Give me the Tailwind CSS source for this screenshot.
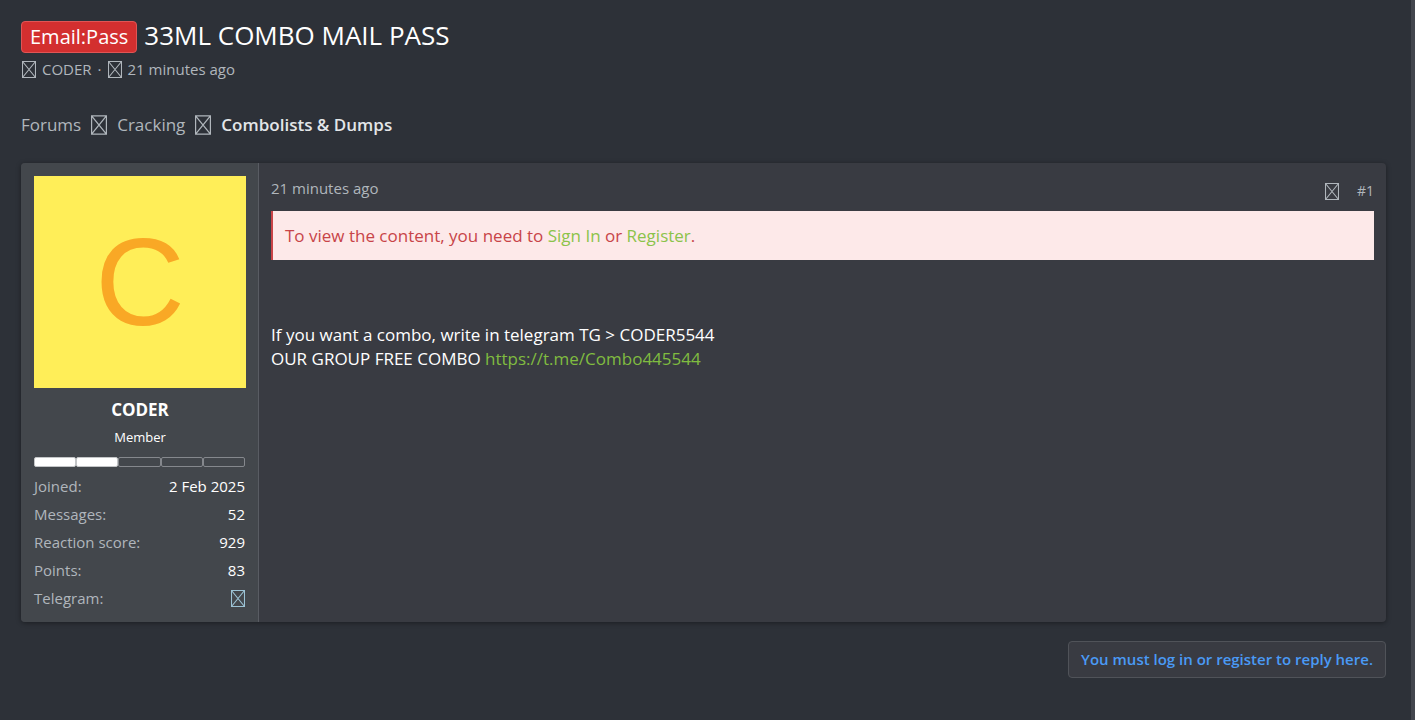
<!DOCTYPE html>
<html lang="en">
<head>
  <meta charset="UTF-8">
  <meta name="viewport" content="width=device-width, initial-scale=1.0">
  <title>33ML COMBO MAIL PASS</title>
  <script src="https://cdn.jsdelivr.net/npm/@tailwindcss/browser@4"></script>
</head>
<body class="bg-[#2d3138] min-h-screen font-['Open_Sans','Noto_Sans',sans-serif] text-white border-r-4 border-[#43464d]">
  <!-- Shared icon shapes -->
  <svg class="hidden">
    <symbol id="box" viewBox="0 0 14 17">
      <path d="M.5 .5h13v16H.5zM.5 .5l13 16M13.5 .5l-13 16" fill="none" stroke="currentColor" stroke-width="1.1"/>
    </symbol>
  </svg>

  <div class="pl-[21px] pr-[25px] pt-5">
    <!-- Thread title -->
    <header>
      <h1 class="flex items-center gap-[7px] text-[26px] leading-8">
        <span class="mt-px h-8 rounded border border-[#e05555] bg-[#d32f2f] px-2 text-[20px] leading-[30px]">Email:Pass</span>
        <span class="-mt-1">33ML COMBO MAIL PASS</span>
      </h1>
      <div class="mt-1 flex items-center gap-[6px] text-[15px] leading-6 text-[#b0b6bc]">
        <svg class="h-[17px] w-[14px] ml-px" role="img" aria-label="Thread starter"><use href="#box"/></svg>
        <a href="#">CODER</a>
        <span>·</span>
        <svg class="h-[17px] w-[14px]" role="img" aria-label="Start date"><use href="#box"/></svg>
        <time>21 minutes ago</time>
      </div>
    </header>

    <!-- Breadcrumbs -->
    <nav class="mt-8 flex items-center gap-[10px] text-[17px] leading-6 text-[#b0b6bc]">
      <a href="#">Forums</a>
      <svg class="h-5 w-4" aria-hidden="true"><use href="#box"/></svg>
      <a href="#">Cracking</a>
      <svg class="h-5 w-4" aria-hidden="true"><use href="#box"/></svg>
      <a href="#" class="font-semibold text-[#e3e6e8]">Combolists &amp; Dumps</a>
    </nav>

    <!-- Post -->
    <article class="mt-[26px] flex min-h-[459px] overflow-hidden rounded bg-[#393b42] shadow-[0_1px_5px_rgba(0,0,0,0.4)]">
      <aside class="w-[238px] shrink-0 border-r border-[#595c63] bg-[#43474c] pt-[13px] pr-3 pl-[13px] text-[15px]">
        <div class="flex aspect-square w-full items-center justify-center bg-[#ffee58] font-['Liberation_Sans',sans-serif] text-[124px] leading-none text-[#f9a825]">C</div>
        <h2 class="mt-2 text-center text-[17px] leading-7 font-bold">CODER</h2>
        <p class="mt-px text-center text-[13px] leading-6">Member</p>
        <div class="mt-2 mr-px flex h-[10px]">
          <span class="flex-1 rounded-xs border border-[#c3c5c7] bg-white"></span>
          <span class="flex-1 rounded-xs border border-[#c3c5c7] bg-white"></span>
          <span class="flex-1 rounded-xs border border-[#85888d]"></span>
          <span class="flex-1 rounded-xs border border-[#85888d]"></span>
          <span class="flex-1 rounded-xs border border-[#85888d]"></span>
        </div>
        <dl class="mt-[7px] mr-px grid grid-cols-[auto_auto] justify-between gap-y-1 leading-6 text-[#b0b6bc] [&>dd]:text-right [&>dd]:text-white">
          <dt>Joined:</dt><dd>2 Feb 2025</dd>
          <dt>Messages:</dt><dd>52</dd>
          <dt>Reaction score:</dt><dd>929</dd>
          <dt>Points:</dt><dd>83</dd>
          <dt>Telegram:</dt>
          <dd class="flex items-center justify-end">
            <svg class="h-[17px] w-[14px] text-[#9cc3d5]" role="img" aria-label="Telegram"><use href="#box"/></svg>
          </dd>
        </dl>
      </aside>

      <div class="min-w-0 flex-1 px-3 pt-[13px]">
        <div class="flex items-start justify-between text-[15px] leading-6 text-[#b0b6bc]">
          <time>21 minutes ago</time>
          <div class="mt-[3px] flex items-center gap-[18px]">
            <a href="#" aria-label="Share"><svg class="h-[17px] w-[14px]"><use href="#box"/></svg></a>
            <a href="#" class="text-[14px]">#1</a>
          </div>
        </div>
        <div class="mt-2 border-l-2 border-[#c84448] bg-[#fde9e9] px-3 py-3 text-[17px] leading-[25px] text-[#c84448]">
          To view the content, you need to <a href="#" class="text-[#8bc34a]">Sign In</a> or <a href="#" class="text-[#8bc34a]">Register</a>.
        </div>
        <p class="mt-[63px] text-[17px] leading-6">
          If you want a combo, write in telegram TG &gt; CODER5544<br>
          OUR GROUP FREE COMBO <a href="#" class="text-[#80bc40]">https://t.me/Combo445544</a>
        </p>
      </div>
    </article>

    <div class="mt-[19px] flex justify-end">
      <a href="#" class="rounded border border-[#505359] bg-[#393b42] px-3 pt-[5px] pb-[5px] text-[15px] leading-[25px] font-semibold text-[#4a9af5]">You must log in or register to reply here.</a>
    </div>
  </div>
</body>
</html>
